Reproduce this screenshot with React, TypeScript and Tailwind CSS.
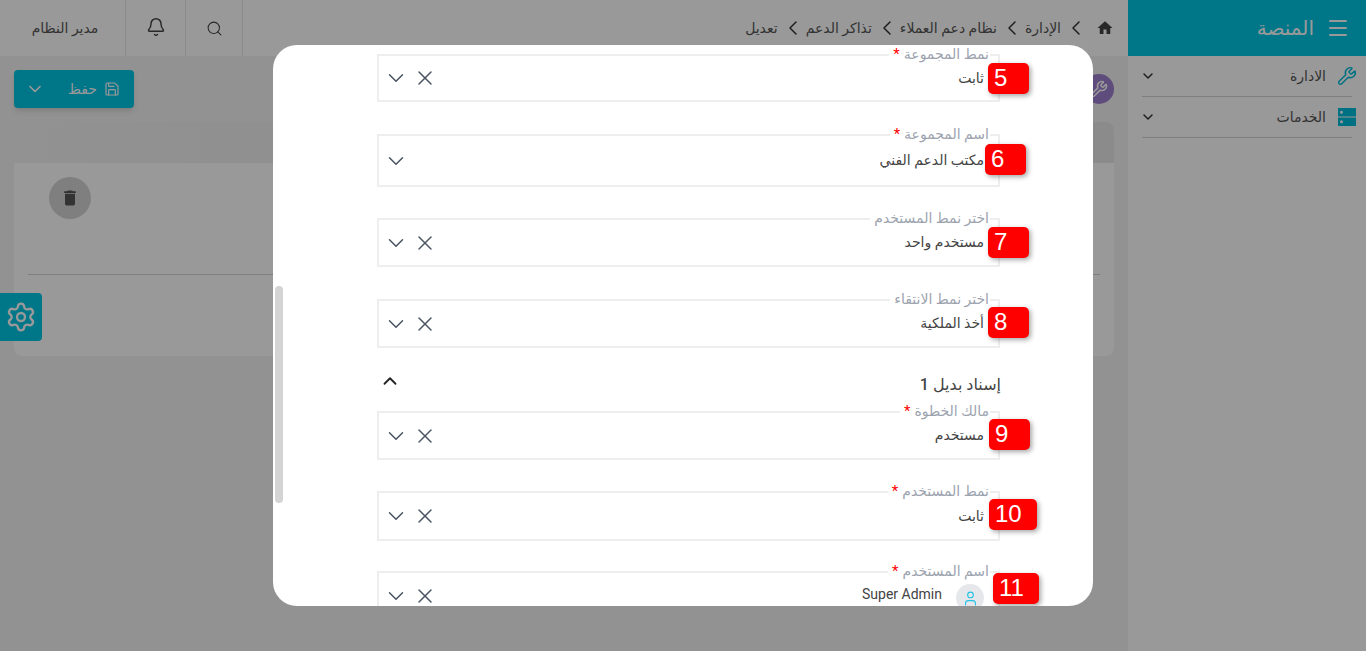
import { Bell, ChevronDown, ChevronLeft, ChevronUp, Menu, Save, Search, Settings, User, Wrench, X } from "lucide-react";

type FieldProps = {
  label: string;
  required?: boolean;
  value: string;
  clear?: boolean;
  boxClass: string;
  badge: string;
  badgeClass: string;
  avatar?: boolean;
};

const crumbs = ["الإدارة", "نظام دعم العملاء", "تذاكر الدعم", "تعديل"];

const fields: FieldProps[] = [
  { label: "نمط المجموعة", required: true, value: "ثابت", clear: true, boxClass: "h-[48px] mb-[32px]", badge: "5", badgeClass: "top-[7px] -right-[31px] w-[41px]" },
  { label: "اسم المجموعة", required: true, value: "مكتب الدعم الفني", boxClass: "h-[53px] mb-[31px]", badge: "6", badgeClass: "top-[8px] -right-[28px] w-[41px]" },
  { label: "اختر نمط المستخدم", value: "مستخدم واحد", clear: true, boxClass: "h-[49px] mb-[32px]", badge: "7", badgeClass: "top-[7px] -right-[31px] w-[41px]" },
  { label: "اختر نمط الانتقاء", value: "أخذ الملكية", clear: true, boxClass: "h-[49px]", badge: "8", badgeClass: "top-[6px] -right-[31px] w-[41px]" },
];

const fields2: FieldProps[] = [
  { label: "مالك الخطوة", required: true, value: "مستخدم", clear: true, boxClass: "h-[49px] mb-[31px]", badge: "9", badgeClass: "top-[6px] -right-[32px] w-[41px]" },
  { label: "نمط المستخدم", required: true, value: "ثابت", clear: true, boxClass: "h-[50px] mb-[30px]", badge: "10", badgeClass: "top-[6px] -right-[39px] w-[48px]" },
  { label: "اسم المستخدم", required: true, value: "Super Admin", clear: true, boxClass: "h-[50px]", badge: "11", badgeClass: "top-[0px] -right-[41px] w-[46px]", avatar: true },
];

function Field({ label, required, value, clear, boxClass, badge, badgeClass, avatar }: FieldProps) {
  return (
    <div className={`relative w-[623px] border-2 border-[#eeeeee] flex items-center pr-[14px] pl-[4px] ${boxClass}`}>
      <div className="absolute -top-[10px] right-[8px] h-[16px] bg-white pr-[1px] pl-[4px] flex items-center gap-[4px] text-[14px] leading-[16px] text-[#9ca3af] whitespace-nowrap">
        <span>{label}</span>
        {required && <span className="text-[#ff0000] text-[15px] leading-[16px]">*</span>}
      </div>
      {avatar ? (
        <div className="flex items-center gap-[14px] pt-[4px]">
          <div className="w-[28px] h-[28px] rounded-full bg-[#e5e7eb] flex items-center justify-center">
            <User size={17} strokeWidth={1.5} className="text-[#22c3e6]" />
          </div>
          <span dir="ltr" className="text-[14px] text-[#444444] -mt-[8px] font-['Roboto',sans-serif]">{value}</span>
        </div>
      ) : (
        <span className="text-[14px] text-[#444444]">{value}</span>
      )}
      <div className="mr-auto flex items-center gap-[4px]">
        {clear && <X size={24} strokeWidth={1.5} className="text-[#4b5563]" />}
        <ChevronDown size={26} strokeWidth={1.4} className="text-[#4b5563]" />
      </div>
      <div dir="ltr" className={`absolute h-[31px] rounded-[5px] bg-[#ff0000] text-white text-[24px] leading-[29px] text-left pl-[6px] font-['Liberation_Sans',sans-serif] shadow-[2px_2px_5px_rgba(0,0,0,0.35)] ${badgeClass}`}>
        {badge}
      </div>
    </div>
  );
}

export default function App() {
  return (
    <div dir="rtl" className="relative h-[651px] w-[1366px] overflow-hidden bg-[#f3f3f3] flex font-['Roboto','Noto_Sans','DejaVu_Sans',sans-serif]">
      {/* sidebar */}
      <aside className="w-[238px] shrink-0 bg-white">
        <div className="h-14 bg-[#00c6e4] flex items-center gap-[12px] pr-[16px] text-white">
          <Menu size={24} strokeWidth={2} />
          <span className="text-[20px]">المنصة</span>
        </div>
        <div className="px-[14px]">
          <div className="h-[41px] flex items-center border-b border-[#d1d5db] text-[14px] text-[#555555]">
            <Wrench size={20} strokeWidth={1.75} className="text-[#00bcd9] -mr-[5px] ml-[11px]" />
            <span>الادارة</span>
            <ChevronDown size={16} strokeWidth={2.25} className="mr-auto -ml-[2px] text-[#333333]" />
          </div>
          <div className="h-[41px] flex items-center border-b border-[#d1d5db] text-[14px] text-[#555555]">
            <svg width="20" height="20" viewBox="0 0 20 20" className="-mr-[5px] ml-[11px] text-[#00bcd9]">
              <path fill="currentColor" fillRule="evenodd" d="M1 1h18v8.5H1zM1 10.5h18V19H1zM4.5 3.7a1.5 1.5 0 1 0 0 3 1.5 1.5 0 0 0 0-3zM4.5 13.2a1.5 1.5 0 1 0 0 3 1.5 1.5 0 0 0 0-3z" />
            </svg>
            <span>الخدمات</span>
            <ChevronDown size={16} strokeWidth={2.25} className="mr-auto -ml-[2px] text-[#333333]" />
          </div>
        </div>
      </aside>

      {/* main */}
      <div className="flex-1 min-w-0">
        <header className="h-14 bg-white flex items-center">
          <nav className="flex items-center pr-[14px] text-[14px] text-[#555555]">
            <svg width="18" height="18" viewBox="0 0 24 24" className="text-[#444444] ml-[7px]">
              <path fill="currentColor" d="M10 20v-6h4v6h5v-8h3L12 3 2 12h3v8z" />
            </svg>
            {crumbs.map((c) => (
              <span key={c} className="flex items-center">
                <ChevronLeft size={24} strokeWidth={1.5} className="text-[#333333] mr-[1px] ml-[3px]" />
                <span>{c}</span>
              </span>
            ))}
          </nav>
          <div className="mr-auto flex h-full text-[#444444]">
            <div className="w-[58px] border-r border-l border-[#e5e7eb] flex items-center justify-center">
              <Search size={17} strokeWidth={1.5} />
            </div>
            <div className="w-[60px] border-l border-[#e5e7eb] flex items-center justify-center">
              <Bell size={20} strokeWidth={1.75} className="-mt-[3px]" />
            </div>
            <div className="w-[125px] flex items-center justify-center pl-[5px] text-[14px] text-[#555555]">مدير النظام</div>
          </div>
        </header>

        <div className="px-[14px] pt-[14px]">
          <div className="flex items-center justify-between h-[38px]">
            <div className="w-[30px] h-[30px] rounded-full bg-[#9d7fcf] flex items-center justify-center">
              <Wrench size={18} className="text-white" />
            </div>
            <div className="w-[120px] h-[38px] rounded-[4px] bg-[#00c6e4] shadow-md flex items-center text-white text-[14px]">
              <Save size={16} strokeWidth={1.75} className="mr-[14px] ml-[7px]" />
              <span>حفظ</span>
              <ChevronDown size={20} className="mr-auto ml-[11px]" />
            </div>
          </div>
          <div className="mt-[14px] h-[41px] rounded-t-[8px] bg-linear-to-r from-[#f3f3f3] to-[#e8e8e8]" />
          <div className="h-[193px] rounded-b-[8px] bg-white px-[14px] pt-[14px]">
            <div className="flex justify-end pl-[21px]">
              <div className="w-[42px] h-[42px] rounded-full bg-[#d4d4d4] flex items-center justify-center">
                <svg width="20" height="20" viewBox="0 0 24 24" className="text-[#555555]">
                  <path fill="currentColor" d="M6 19c0 1.1.9 2 2 2h8c1.1 0 2-.9 2-2V7H6v12zM19 4h-3.5l-1-1h-5l-1 1H5v2h14V4z" />
                </svg>
              </div>
            </div>
            <div className="mt-[55px] border-t border-[#d1d5db]" />
          </div>
        </div>
      </div>

      {/* settings tab */}
      <div className="absolute left-0 top-[293px] w-[42px] h-[48px] rounded-r-[4px] bg-[#00c6e4] flex items-center justify-center text-white">
        <Settings size={32} strokeWidth={1.75} />
      </div>

      {/* backdrop */}
      <div className="absolute inset-0 bg-black/40" />

      {/* modal */}
      <div className="absolute left-[273px] top-[45px] w-[820px] h-[561px] rounded-[24px] bg-white overflow-hidden pt-[9px] pr-[93px]">
        <div className="absolute left-[2px] top-[241px] w-[8px] h-[217px] rounded-full bg-[#d4d4d4]" />
        {fields.map((f) => (
          <Field key={f.badge} {...f} />
        ))}
        <div className="w-[623px] h-[63px] flex items-center justify-between text-[16px] text-[#444444] pt-[11px] -mr-[1px]">
          <span>
            إسناد بديل <b className="font-medium">1</b>
          </span>
          <ChevronUp size={22} strokeWidth={2} className="ml-[1px] -mt-[8px] text-[#222222]" />
        </div>
        {fields2.map((f) => (
          <Field key={f.badge} {...f} />
        ))}
      </div>
    </div>
  );
}
